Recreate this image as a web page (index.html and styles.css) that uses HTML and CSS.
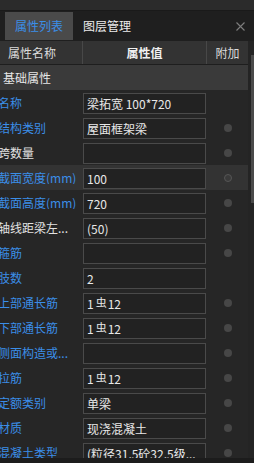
FILE: index.html
```html
<!DOCTYPE html>
<html lang="zh">
<head>
<meta charset="utf-8">
<title>属性列表</title>
<link rel="stylesheet" href="styles.css">
</head>
<body>
<div class="app">
  <div class="topstrip"></div>
  <div class="tabs">
    <div class="tab active">属性列表</div>
    <div class="tab">图层管理</div>
    <div class="close">
      <svg width="9" height="9" viewBox="0 0 9 9"><path d="M0.5 0.5 L8.5 8.5 M8.5 0.5 L0.5 8.5" stroke="#7e7e7e" stroke-width="1.1" fill="none"/></svg>
    </div>
  </div>
  <div class="main">
    <div class="table">
      <div class="head">
        <div class="hcell hname">属性名称</div>
        <div class="hcell hvalue">属性值</div>
        <div class="hcell hextra">附加</div>
      </div>
      <div class="group">基础属性</div>
      <div class="rows">
        <div class="row"><div class="label">名称</div><div class="value"><div class="input">梁拓宽 100*720</div></div><div class="extra"></div></div>
        <div class="row"><div class="label">结构类别</div><div class="value"><div class="input">屋面框架梁</div></div><div class="extra"><span class="dot"></span></div></div>
        <div class="row"><div class="label plain">跨数量</div><div class="value"><div class="input"></div></div><div class="extra"><span class="dot"></span></div></div>
        <div class="row selected"><div class="label">截面宽度(mm)</div><div class="value"><div class="input">100</div></div><div class="extra"><span class="dot hollow"></span></div></div>
        <div class="row"><div class="label">截面高度(mm)</div><div class="value"><div class="input">720</div></div><div class="extra"><span class="dot"></span></div></div>
        <div class="row"><div class="label plain">轴线距梁左...</div><div class="value"><div class="input">(50)</div></div><div class="extra"><span class="dot"></span></div></div>
        <div class="row"><div class="label">箍筋</div><div class="value"><div class="input"></div></div><div class="extra"><span class="dot"></span></div></div>
        <div class="row"><div class="label">肢数</div><div class="value"><div class="input">2</div></div><div class="extra"></div></div>
        <div class="row"><div class="label">上部通长筋</div><div class="value"><div class="input">1<span class="bar">虫</span>12</div></div><div class="extra"><span class="dot"></span></div></div>
        <div class="row"><div class="label">下部通长筋</div><div class="value"><div class="input">1<span class="bar">虫</span>12</div></div><div class="extra"><span class="dot"></span></div></div>
        <div class="row"><div class="label">侧面构造或...</div><div class="value"><div class="input"></div></div><div class="extra"><span class="dot"></span></div></div>
        <div class="row"><div class="label">拉筋</div><div class="value"><div class="input">1<span class="bar">虫</span>12</div></div><div class="extra"><span class="dot"></span></div></div>
        <div class="row"><div class="label">定额类别</div><div class="value"><div class="input">单梁</div></div><div class="extra"><span class="dot"></span></div></div>
        <div class="row"><div class="label">材质</div><div class="value"><div class="input">现浇混凝土</div></div><div class="extra"><span class="dot"></span></div></div>
        <div class="row"><div class="label link">混凝土类型</div><div class="value"><div class="input">(粒径31.5砼32.5级...</div></div><div class="extra"><span class="dot"></span></div></div>
      </div>
    </div>
    <div class="scroll"><div class="thumb"></div></div>
  </div>
  <div class="bottombar"></div>
</div>
</body>
</html>
```

FILE: styles.css
```css
* { box-sizing: border-box; }
html, body {
  margin: 0;
  padding: 0;
}
body {
  width: 254px;
  height: 463px;
  overflow: hidden;
  background: #262626;
  font-family: "Noto Sans CJK SC", "Microsoft YaHei", sans-serif;
  font-size: 12px;
  color: #e4e4e4;
}
.app {
  display: flex;
  flex-direction: column;
  height: 463px;
}
.topstrip {
  flex: none;
  height: 11px;
  background: #2b2b2b;
  border-bottom: 1px solid #1a1a1a;
}
.tabs {
  height: 30px;
  flex: none;
  background: #1f1f1f;
  display: flex;
  align-items: stretch;
  padding: 1px 0 1px 5px;
}
.tab {
  display: flex;
  align-items: center;
  padding: 0 10px;
  line-height: 1;
  color: #ececec;
}
.tab.active {
  background: #4a4a4a;
  color: #3b8ee8;
}
.close {
  margin-left: auto;
  width: 18px;
  display: flex;
  align-items: center;
}
.close svg { display: block; }
.main {
  flex: 1;
  display: flex;
  min-height: 0;
}
.table {
  width: 248px;
  flex: none;
  display: flex;
  flex-direction: column;
  min-height: 0;
}
.head {
  height: 24px;
  flex: none;
  background: #333333;
  border-bottom: 1px solid #1e1e1e;
  display: grid;
  grid-template-columns: 83px 124px 41px;
}
.hcell {
  display: flex;
  align-items: center;
  line-height: 1;
  color: #dcdcdc;
  border-right: 1px solid #484848;
}
.hname { padding-left: 8px; }
.hvalue {
  justify-content: center;
  font-weight: bold;
  color: #f0f0f0;
}
.hextra {
  justify-content: center;
  border-right: none;
}
.group {
  height: 25px;
  flex: none;
  background: #3a3a3a;
  display: flex;
  align-items: center;
  padding-left: 3px;
  line-height: 1;
  color: #e6e6e6;
}
.rows {
  flex: 1;
  min-height: 0;
  overflow: hidden;
  display: flex;
  flex-direction: column;
}
.row {
  height: 25px;
  flex: none;
  display: grid;
  grid-template-columns: 83px 124px 41px;
  align-items: center;
}
.row.selected { background: #333333; }
.label {
  overflow: hidden;
  white-space: nowrap;
  line-height: 1;
  text-indent: -2px;
  color: #3b8ee8;
  padding-top: 1px;
}
.label.plain { color: #e2e2e2; }
.label.link { text-decoration: underline; text-underline-offset: 2px; }
.value { display: flex; }
.input {
  width: 123px;
  height: 21px;
  margin-top: 2px;
  border: 1px solid #4a4a4a;
  background: #222222;
  display: flex;
  align-items: center;
  padding-left: 3px;
  line-height: 1;
  white-space: nowrap;
  overflow: hidden;
  color: #e8e8e8;
}
.bar {
  font-size: 11px;
  margin: 0 1px 0 2px;
  position: relative;
  top: -1px;
}
.extra {
  display: flex;
  justify-content: center;
  align-items: center;
}
.dot {
  width: 8px;
  height: 8px;
  border-radius: 50%;
  background: #474747;
}
.dot.hollow {
  background: #3a3a3a;
  border: 1px solid #565656;
}
.scroll {
  width: 6px;
  flex: none;
  background: #242424;
}
.thumb {
  width: 3px;
  height: 148px;
  margin-top: 14px;
  margin-left: 3px;
  background: #4a4a4a;
}
.bottombar {
  height: 5px;
  flex: none;
  background: #1c1c1c;
}
```
